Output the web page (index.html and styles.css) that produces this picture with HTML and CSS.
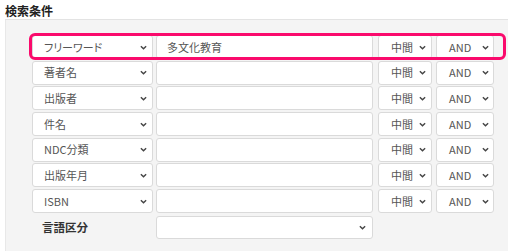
FILE: index.html
```html
<!DOCTYPE html>
<html lang="ja">
<head>
  <meta charset="UTF-8" />
  <title>検索条件</title>
  <link rel="stylesheet" href="styles.css">
</head>
<body>
  <h2 class="title">検索条件</h2>
  <div class="panel">
    <div class="cond-grid">
      <div class="row first">
        <div class="sel field-sel"><span>フリーワード</span><svg class="chev" viewBox="0 0 8 5"><path d="M1 1l3 3 3-3"/></svg></div>
        <div class="txt">多文化教育</div>
        <div class="sel mode-sel"><span>中間</span><svg class="chev" viewBox="0 0 8 5"><path d="M1 1l3 3 3-3"/></svg></div>
        <div class="sel op-sel"><span>AND</span><svg class="chev" viewBox="0 0 8 5"><path d="M1 1l3 3 3-3"/></svg></div>
        <div class="highlight"></div>
      </div>
      <div class="row">
        <div class="sel field-sel"><span>著者名</span><svg class="chev" viewBox="0 0 8 5"><path d="M1 1l3 3 3-3"/></svg></div>
        <div class="txt"></div>
        <div class="sel mode-sel"><span>中間</span><svg class="chev" viewBox="0 0 8 5"><path d="M1 1l3 3 3-3"/></svg></div>
        <div class="sel op-sel"><span>AND</span><svg class="chev" viewBox="0 0 8 5"><path d="M1 1l3 3 3-3"/></svg></div>
      </div>
      <div class="row">
        <div class="sel field-sel"><span>出版者</span><svg class="chev" viewBox="0 0 8 5"><path d="M1 1l3 3 3-3"/></svg></div>
        <div class="txt"></div>
        <div class="sel mode-sel"><span>中間</span><svg class="chev" viewBox="0 0 8 5"><path d="M1 1l3 3 3-3"/></svg></div>
        <div class="sel op-sel"><span>AND</span><svg class="chev" viewBox="0 0 8 5"><path d="M1 1l3 3 3-3"/></svg></div>
      </div>
      <div class="row">
        <div class="sel field-sel"><span>件名</span><svg class="chev" viewBox="0 0 8 5"><path d="M1 1l3 3 3-3"/></svg></div>
        <div class="txt"></div>
        <div class="sel mode-sel"><span>中間</span><svg class="chev" viewBox="0 0 8 5"><path d="M1 1l3 3 3-3"/></svg></div>
        <div class="sel op-sel"><span>AND</span><svg class="chev" viewBox="0 0 8 5"><path d="M1 1l3 3 3-3"/></svg></div>
      </div>
      <div class="row">
        <div class="sel field-sel"><span>NDC分類</span><svg class="chev" viewBox="0 0 8 5"><path d="M1 1l3 3 3-3"/></svg></div>
        <div class="txt"></div>
        <div class="sel mode-sel"><span>中間</span><svg class="chev" viewBox="0 0 8 5"><path d="M1 1l3 3 3-3"/></svg></div>
        <div class="sel op-sel"><span>AND</span><svg class="chev" viewBox="0 0 8 5"><path d="M1 1l3 3 3-3"/></svg></div>
      </div>
      <div class="row">
        <div class="sel field-sel"><span>出版年月</span><svg class="chev" viewBox="0 0 8 5"><path d="M1 1l3 3 3-3"/></svg></div>
        <div class="txt"></div>
        <div class="sel mode-sel"><span>中間</span><svg class="chev" viewBox="0 0 8 5"><path d="M1 1l3 3 3-3"/></svg></div>
        <div class="sel op-sel"><span>AND</span><svg class="chev" viewBox="0 0 8 5"><path d="M1 1l3 3 3-3"/></svg></div>
      </div>
      <div class="row">
        <div class="sel field-sel"><span>ISBN</span><svg class="chev" viewBox="0 0 8 5"><path d="M1 1l3 3 3-3"/></svg></div>
        <div class="txt"></div>
        <div class="sel mode-sel"><span>中間</span><svg class="chev" viewBox="0 0 8 5"><path d="M1 1l3 3 3-3"/></svg></div>
        <div class="sel op-sel"><span>AND</span><svg class="chev" viewBox="0 0 8 5"><path d="M1 1l3 3 3-3"/></svg></div>
      </div>
      <div class="row">
        <div class="label">言語区分</div>
        <div class="sel lang-sel"><span></span><svg class="chev" viewBox="0 0 8 5"><path d="M1 1l3 3 3-3"/></svg></div>
      </div>
    </div>
  </div>
</body>
</html>
```

FILE: styles.css
```css
* {
  margin: 0;
  padding: 0;
  box-sizing: border-box;
}

body {
  font-family: "Noto Sans CJK JP", "Noto Sans", sans-serif;
  font-feature-settings: "palt";
  background: #fff;
  color: #555;
  font-size: 11px;
}

.title {
  font-size: 12px;
  font-weight: bold;
  color: #222;
  line-height: 16px;
  padding: 3px 0 0 5px;
}

.panel {
  margin: 0 0 0 5px;
  height: 240px;
  background: #f4f4f4;
  border-top: 1px solid #e3e3e3;
  border-left: 1px solid #e8e8e8;
  padding: 15px 0 0 26px;
}

.cond-grid {
  display: flex;
  flex-direction: column;
  gap: 1.7px;
}

.row {
  position: relative;
  display: grid;
  grid-template-columns: 121px 217px 56px 59px;
  column-gap: 3px;
  height: 24px;
}

.row .mode-sel {
  margin-left: 2px;
}

.row .op-sel {
  margin-left: 1px;
}

.sel,
.txt {
  background: #fff;
  border: 1px solid #dadada;
  border-radius: 3px;
  display: flex;
  align-items: center;
  line-height: 1;
}

.sel {
  justify-content: space-between;
  padding: 0 5px 0 11px;
}

.mode-sel {
  padding: 0 5px 0 12px;
}

.op-sel {
  padding: 0 4px 0 12px;
}

.lang-sel {
  margin-top: 1px;
  padding-right: 6px;
}

.txt {
  padding: 0 10px;
}

.chev {
  width: 7px;
  height: 5px;
  fill: none;
  stroke: #444;
  stroke-width: 1.6;
}

.label {
  display: flex;
  align-items: center;
  padding-left: 10px;
  color: #333;
  font-weight: bold;
  font-size: 11.5px;
}

.highlight {
  position: absolute;
  top: -2px;
  left: -3px;
  right: 2px;
  bottom: -1px;
  border: 3px solid #fa0a6c;
  border-radius: 6px;
}
```
